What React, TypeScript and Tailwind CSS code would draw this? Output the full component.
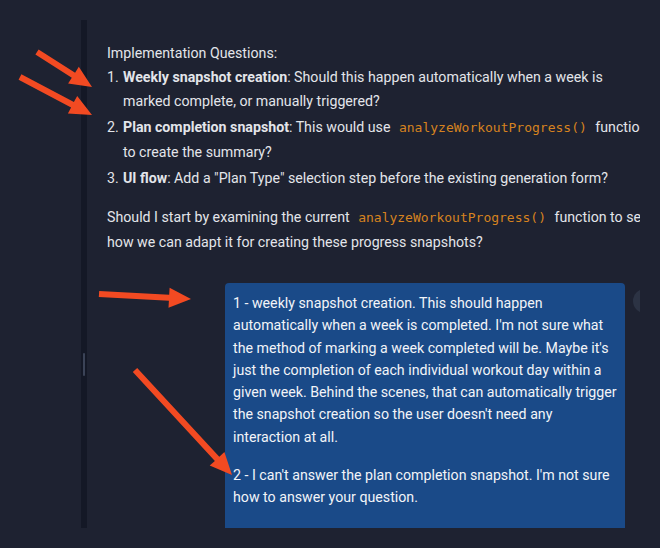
import React from "react";

type Pt = [number, number];

function arrowPoints(tail: Pt, tip: Pt, shaft = 6, headLen = 22, headW = 20): string {
  const dx = tip[0] - tail[0];
  const dy = tip[1] - tail[1];
  const len = Math.hypot(dx, dy);
  const ux = dx / len;
  const uy = dy / len;
  const nx = -uy;
  const ny = ux;
  const bx = tip[0] - ux * headLen;
  const by = tip[1] - uy * headLen;
  const s = shaft / 2;
  const h = headW / 2;
  const pts: Pt[] = [
    [tail[0] + nx * s, tail[1] + ny * s],
    [bx + nx * s, by + ny * s],
    [bx + nx * h, by + ny * h],
    [tip[0], tip[1]],
    [bx - nx * h, by - ny * h],
    [bx - nx * s, by - ny * s],
    [tail[0] - nx * s, tail[1] - ny * s],
  ];
  return pts.map((p) => `${p[0].toFixed(1)},${p[1].toFixed(1)}`).join(" ");
}

function Code({ children }: { children: React.ReactNode }) {
  return (
    <code
      className="px-[5px] text-[13px] text-[#d6821f]"
      style={{ fontFamily: '"DejaVu Sans Mono", "Liberation Mono", monospace' }}
    >
      {children}
    </code>
  );
}

export default function App() {
  const arrows: [Pt, Pt][] = [
    [[37, 52], [92, 87]],
    [[20, 77], [92, 115]],
    [[99, 294], [191, 299]],
    [[135, 370], [232, 475]],
  ];
  return (
    <div
      className="relative h-[548px] w-[660px] overflow-hidden bg-[#1e2231] pt-[20px]"
      style={{ fontFamily: 'Roboto, "Noto Sans", sans-serif' }}
    >
      <div className="flex h-[508px]">
        <div className="w-[81px] shrink-0" />
        <div className="relative w-[6px] shrink-0 bg-[#141826]">
          <div className="absolute left-[2px] top-[333px] h-[23px] w-[2px] rounded-full bg-[#3b4357]" />
        </div>
        <div className="h-[508px] w-[553px] shrink-0 overflow-hidden">
          <div className="w-[570px] pl-[20px] pt-[21px] text-[14.2px] text-[#e3e5ea]">
            <div className="whitespace-nowrap leading-[24px]">Implementation Questions:</div>
            <div className="mt-[1px] whitespace-nowrap">
              <div className="flex leading-[23.5px]">
                <span className="w-[16px] shrink-0">1.</span>
                <div>
                  <div>
                    <b className="font-bold">Weekly snapshot creation</b>: Should this happen automatically when a week is
                  </div>
                  <div>marked complete, or manually triggered?</div>
                </div>
              </div>
              <div className="mt-[2px] flex leading-[25px]">
                <span className="w-[16px] shrink-0">2.</span>
                <div>
                  <div>
                    <b className="font-bold">Plan completion snapshot</b>: This would use <Code>analyzeWorkoutProgress()</Code> function
                    to use the
                  </div>
                  <div>to create the summary?</div>
                </div>
              </div>
              <div className="mt-[1px] flex leading-[25px]">
                <span className="w-[16px] shrink-0">3.</span>
                <div>
                  <b className="font-bold">UI flow</b>: Add a "Plan Type" selection step before the existing generation form?
                </div>
              </div>
            </div>
            <div className="mt-[14px] whitespace-nowrap leading-[24px]">
              <div>
                Should I start by examining the current <Code>analyzeWorkoutProgress()</Code> function to see
              </div>
              <div>how we can adapt it for creating these progress snapshots?</div>
            </div>

            <div className="mt-[29px] flex justify-end gap-[8px]">
              <div className="w-[400px] shrink-0 rounded-t-[4px] bg-[#1a4a88] px-[8px] pb-[40px] pt-[9px] text-[14.2px] leading-[22.3px] text-[#f2f4f8]">
                <div className="whitespace-nowrap">
                  <div>1 - weekly snapshot creation. This should happen</div>
                  <div>automatically when a week is completed. I'm not sure what</div>
                  <div>the method of marking a week completed will be. Maybe it's</div>
                  <div>just the completion of each individual workout day within a</div>
                  <div>given week. Behind the scenes, that can automatically trigger</div>
                  <div>the snapshot creation so the user doesn't need any</div>
                  <div>interaction at all.</div>
                </div>
                <div className="mt-[16px] whitespace-nowrap">
                  <div>2 - I can't answer the plan completion snapshot. I'm not sure</div>
                  <div>how to answer your question.</div>
                </div>
              </div>
              <div className="mt-[6px] flex h-[24px] w-[24px] shrink-0 items-center justify-center rounded-full bg-[#2c3344] text-[10px] text-[#9aa3b5]">
                A
              </div>
            </div>
          </div>
        </div>
      </div>

      <svg
        className="pointer-events-none absolute left-0 top-0"
        width={660}
        height={548}
        viewBox="0 0 660 548"
      >
        {arrows.map(([a, b], i) => (
          <polygon key={i} points={arrowPoints(a, b)} fill="#f24a22" strokeLinejoin="round" />
        ))}
      </svg>
    </div>
  );
}
